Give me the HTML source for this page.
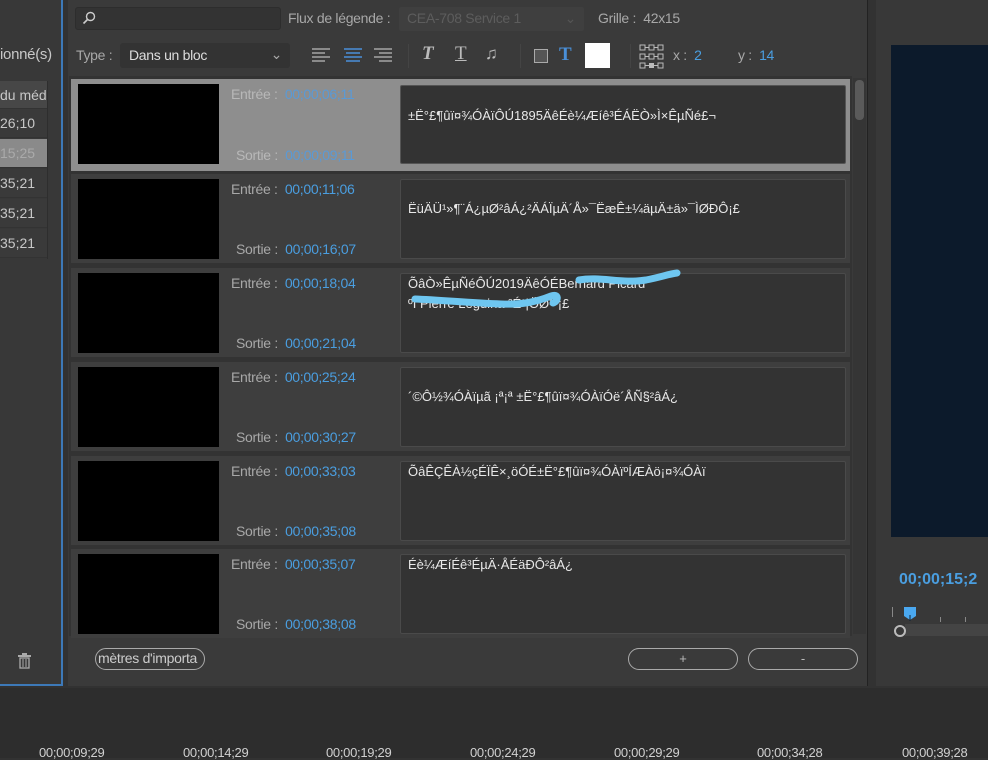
<!DOCTYPE html>
<html><head><meta charset="utf-8"><style>
*{margin:0;padding:0;box-sizing:border-box}
body{width:988px;height:758px;overflow:hidden;background:#323232;font-family:"Liberation Sans",sans-serif;position:relative;color:#bdbdbd}
.a{position:absolute}
.nar{font-family:"Liberation Sans",sans-serif;font-size:14px;letter-spacing:-0.3px;white-space:nowrap}
.lbl{color:#a8a8a8}
.row{position:absolute;left:71px;width:779px;background:#3e3e3e;height:89px}
.thumb{position:absolute;left:7px;top:5px;width:141px;height:80px;background:#000}
.box{position:absolute;left:329px;top:5px;width:446px;height:80px;background:#333;border:1px solid #4a4a4a;border-radius:2px;color:#e8e8e8;font-size:13px;padding:19px 7px;line-height:20px;white-space:nowrap;overflow:hidden}
.tin{position:absolute;left:160px;top:7px}
.tout{position:absolute;left:165px;top:67px}
.v{color:#4a9ee0}
.lrow{position:absolute;left:0;width:47px;height:29px;background:#3a3a3a;font-size:14px;color:#c8c8c8;padding-top:6px;border-bottom:1px solid #333;white-space:nowrap;overflow:hidden}
.tc{position:absolute;top:745px;font-size:13px;color:#d0d0d0}
</style></head><body>
<div class="a" style="left:0;top:0;width:62px;height:686px;background:#383838"></div>
<div class="a" style="left:61px;top:0;width:2px;height:686px;background:#3d79b8"></div>
<div class="a" style="left:0;top:684px;width:63px;height:2px;background:#3d79b8"></div>
<div class="a nar" style="left:0;top:46px;color:#c8c8c8;font-size:15px">ionné(s)</div>
<div class="lrow" style="top:81px;background:#474747;height:28px">du médi</div>
<div class="lrow" style="top:109px">26;10</div>
<div class="lrow" style="top:139px;background:#8a8a8a;color:#aaa">15;25</div>
<div class="lrow" style="top:169px">35;21</div>
<div class="lrow" style="top:199px">35;21</div>
<div class="lrow" style="top:229px">35;21</div>
<div class="a" style="left:47px;top:81px;width:1px;height:178px;background:#2e2e2e"></div>
<svg class="a" style="left:17px;top:653px" width="15" height="16" viewBox="0 0 15 16"><rect x="1" y="2" width="13" height="2" fill="#aaa"/><rect x="5" y="0" width="5" height="2" fill="#aaa"/><rect x="3" y="5" width="9" height="10" fill="none" stroke="#aaa" stroke-width="1.3"/><path d="M6 6v8M9 6v8" stroke="#aaa"/></svg>
<div class="a" style="left:68px;top:0;width:800px;height:686px;background:#3a3a3a;border-right:1px solid #222"></div>
<div class="a" style="left:75px;top:7px;width:206px;height:23px;background:#333;border:1px solid #2d2d2d;border-radius:3px"></div>
<svg class="a" style="left:82px;top:11px" width="14" height="14" viewBox="0 0 14 14"><circle cx="8.5" cy="5.5" r="4" fill="none" stroke="#ccc" stroke-width="1.4"/><path d="M5.5 8.5L1.5 12.5" stroke="#ccc" stroke-width="1.6"/></svg>
<div class="a nar lbl" style="left:288px;top:10px">Flux de légende :</div>
<div class="a nar" style="left:399px;top:7px;width:185px;height:24px;background:#3f3f3f;border-radius:2px;color:#5d5d5d;padding:3px 8px">CEA-708 Service 1<span style="position:absolute;right:8px;color:#555">⌄</span></div>
<div class="a nar lbl" style="left:598px;top:10px">Grille :&nbsp; 42x15</div>
<div class="a nar lbl" style="left:76px;top:47px">Type :</div>
<div class="a nar" style="left:120px;top:43px;width:170px;height:25px;background:#333;border-radius:3px;padding:4px 9px;color:#ddd">Dans un bloc<span style="position:absolute;right:8px;top:3px;color:#aaa">⌄</span></div>
<svg class="a" style="left:310px;top:47px" width="85" height="18" viewBox="0 0 85 18"><g stroke="#bbb" stroke-width="1.3"><path d="M2 2h18M2 6h13M2 10h18M2 14h13"/></g><g stroke="#4a90d9" stroke-width="1.6"><path d="M34 2h18M36 6h14M34 10h18M36 14h14"/></g><g stroke="#bbb" stroke-width="1.3"><path d="M64 2h18M69 6h13M64 10h18M69 14h13"/></g></svg>
<div class="a" style="left:408px;top:44px;width:1px;height:24px;background:#444"></div>
<div class="a" style="left:422px;top:43px;font-family:'Liberation Serif',serif;font-style:italic;font-weight:bold;font-size:19px;color:#bbb">T</div>
<div class="a" style="left:455px;top:43px;font-family:'Liberation Serif',serif;font-size:19px;color:#bbb;text-decoration:underline">T</div>
<div class="a" style="left:485px;top:44px;font-size:17px;color:#bbb">♫</div>
<div class="a" style="left:520px;top:44px;width:1px;height:24px;background:#444"></div>
<div class="a" style="left:534px;top:49px;width:14px;height:14px;border:1.5px solid #aaa;background:#555"></div>
<div class="a" style="left:559px;top:44px;font-family:'Liberation Serif',serif;font-weight:bold;font-size:19px;color:#4a90d9">T</div>
<div class="a" style="left:585px;top:43px;width:25px;height:25px;background:#fff"></div>
<div class="a" style="left:630px;top:44px;width:1px;height:24px;background:#444"></div>
<svg class="a" style="left:639px;top:44px" width="25" height="26" viewBox="0 0 25 26"><g fill="none" stroke="#bbb" stroke-width="1"><rect x="1" y="1" width="5" height="5"/><rect x="10" y="1" width="5" height="5"/><rect x="19" y="1" width="5" height="5"/><rect x="1" y="10" width="5" height="5"/><rect x="10" y="10" width="5" height="5"/><rect x="19" y="10" width="5" height="5"/><rect x="1" y="19" width="5" height="5"/><rect x="19" y="19" width="5" height="5"/><path d="M6 3.5h4M15 3.5h4M6 12.5h4M15 12.5h4M6 21.5h4M15 21.5h4"/></g><rect x="10" y="19" width="5" height="5" fill="#bbb"/></svg>
<div class="a nar lbl" style="left:673px;top:47px">x : &nbsp;<span class="v">2</span></div>
<div class="a nar lbl" style="left:738px;top:47px">y : &nbsp;<span class="v">14</span></div>
<div class="a" style="left:69px;top:76px;width:783px;height:560px;background:#333"></div>
<div class="a" style="left:853px;top:78px;width:13px;height:556px;background:#353535"></div>
<div class="a" style="left:855px;top:80px;width:9px;height:40px;background:#5a5a5a;border-radius:4px"></div>

<div class="row" style="top:79px;background:#8e8e8e;height:92px">
<div class="thumb"></div>
<div class="nar tin" style="color:#b8b8b8">Entrée : &nbsp;<span style="color:#5a9ad6">00;00;06;11</span></div>
<div class="nar tout" style="color:#b8b8b8;top:68px">Sortie : &nbsp;<span style="color:#5a9ad6">00;00;09;11</span></div>
<div class="box" style="top:6px;height:79px;border:1px solid #555;padding-top:20px">±Ë°£¶ûï¤¾ÓÀïÔÚ1895ÄêÉè¼Æíê³ÉÁËÒ»Ì×ÊµÑé£¬</div>
</div>
<div class="row" style="top:174px"><div class="thumb"></div>
<div class="nar tin lbl">Entrée : &nbsp;<span class="v">00;00;11;06</span></div>
<div class="nar tout lbl">Sortie : &nbsp;<span class="v">00;00;16;07</span></div>
<div class="box">ËüÄÜ¹»¶¨Á¿µØ²âÁ¿²ÄÁÏµÄ´Å»¯ËæÊ±¼äµÄ±ä»¯ÌØÐÔ¡£</div></div>
<div class="row" style="top:268px"><div class="thumb"></div>
<div class="nar tin lbl">Entrée : &nbsp;<span class="v">00;00;18;04</span></div>
<div class="nar tout lbl">Sortie : &nbsp;<span class="v">00;00;21;04</span></div>
<div class="box" style="padding-top:0">ÕâÒ»ÊµÑéÔÚ2019ÄêÓÉBernard Picard<br>ºÍ Pierre Leguina ³É¹¦ÖØ¹¹¡£</div>
<svg class="a" style="left:330px;top:0px" width="290" height="50" viewBox="0 0 290 50"><path d="M178 12C200 8 220 16 245 12C260 9 268 6 276 5M14 31C40 32 70 35 100 36C120 37 135 34 150 28C158 25 158 33 152 35" fill="none" stroke="#6ec6f0" stroke-width="7" stroke-linecap="round"/></svg>
</div>
<div class="row" style="top:362px"><div class="thumb"></div>
<div class="nar tin lbl">Entrée : &nbsp;<span class="v">00;00;25;24</span></div>
<div class="nar tout lbl">Sortie : &nbsp;<span class="v">00;00;30;27</span></div>
<div class="box">´©Ô½¾ÓÀïµã ¡ª¡ª ±Ë°£¶ûï¤¾ÓÀïÓë´ÅÑ§²âÁ¿</div></div>
<div class="row" style="top:456px"><div class="thumb"></div>
<div class="nar tin lbl">Entrée : &nbsp;<span class="v">00;00;33;03</span></div>
<div class="nar tout lbl">Sortie : &nbsp;<span class="v">00;00;35;08</span></div>
<div class="box" style="padding-top:0">ÕâÊÇÊÀ½çÉÏÊ×¸öÓÉ±Ë°£¶ûï¤¾ÓÀïºÍÆÀö¡¤¾ÓÀï</div></div>
<div class="row" style="top:549px"><div class="thumb"></div>
<div class="nar tin lbl">Entrée : &nbsp;<span class="v">00;00;35;07</span></div>
<div class="nar tout lbl">Sortie : &nbsp;<span class="v">00;00;38;08</span></div>
<div class="box" style="padding-top:0">Éè¼ÆíÉê³ÉµÄ·ÅÉäÐÔ²âÁ¿</div></div>

<div class="a nar" style="left:95px;top:648px;width:110px;height:22px;border:1.5px solid #aaa;border-radius:11px;color:#ccc;padding:1px 2px;overflow:hidden">mètres d'importa</div>
<div class="a" style="left:628px;top:648px;width:110px;height:22px;border:1.5px solid #aaa;border-radius:11px;text-align:center;color:#bbb;font-size:13px;line-height:19px">+</div>
<div class="a" style="left:748px;top:648px;width:110px;height:22px;border:1.5px solid #aaa;border-radius:11px;text-align:center;color:#bbb;font-size:13px;line-height:19px">-</div>
<div class="a" style="left:876px;top:0;width:112px;height:686px;background:#383838"></div>
<div class="a" style="left:891px;top:45px;width:97px;height:492px;background:#0c1a2b"></div>
<div class="a" style="left:899px;top:571px;font-size:16px;font-weight:bold;color:#4a9ee0">00;00;15;2</div>
<div class="a" style="left:892px;top:607px;width:1px;height:10px;background:#888"></div>
<div class="a" style="left:940px;top:617px;width:1px;height:5px;background:#888"></div>
<div class="a" style="left:965px;top:617px;width:1px;height:5px;background:#888"></div>
<svg class="a" style="left:903px;top:606px" width="14" height="15" viewBox="0 0 14 15"><path d="M1 1h12v9l-6 4-6-4z" fill="#4aa8f0"/><path d="M7 9v6" stroke="#123" /></svg>
<div class="a" style="left:905px;top:624px;width:83px;height:12px;background:#444"></div>
<div class="a" style="left:894px;top:625px;width:12px;height:12px;border:2.5px solid #bbb;border-radius:50%;background:#383838"></div>
<div class="a" style="left:0;top:688px;width:988px;height:70px;background:#2d2d2d"></div>
<div class="tc nar" style="left:39px">00;00;09;29</div>
<div class="tc nar" style="left:183px">00;00;14;29</div>
<div class="tc nar" style="left:326px">00;00;19;29</div>
<div class="tc nar" style="left:470px">00;00;24;29</div>
<div class="tc nar" style="left:614px">00;00;29;29</div>
<div class="tc nar" style="left:757px">00;00;34;28</div>
<div class="tc nar" style="left:902px">00;00;39;28</div>
</body></html>
